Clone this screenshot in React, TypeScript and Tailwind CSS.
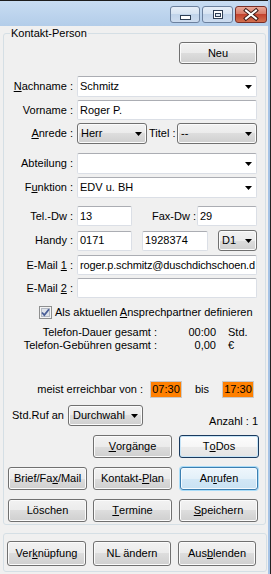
import type { ReactNode } from "react";

const font = "font-['Liberation_Sans',Arial,sans-serif]";

function Arrow() {
  return (
    <svg width="7" height="4" viewBox="0 0 7 4" className="shrink-0">
      <path d="M0 0h7L3.5 4z" fill="#000" />
    </svg>
  );
}

function U({ children }: { children: ReactNode }) {
  return <span className="underline underline-offset-[1px]">{children}</span>;
}

type BtnKind = "normal" | "def" | "hot";

function Btn({
  children,
  className = "",
  kind = "normal",
}: {
  children: ReactNode;
  className?: string;
  kind?: BtnKind;
}) {
  const styles: Record<BtnKind, string> = {
    normal:
      "border-[#707070] bg-[linear-gradient(#f2f2f2,#ebebeb_50%,#dddddd_50%,#cfcfcf)] shadow-[inset_0_0_0_1px_#fbfbfb]",
    def: "border-[#1a3a5e] bg-[linear-gradient(#fdfdfd,#f6f6f6_50%,#ececec_50%,#e4e4e4)] shadow-[inset_0_0_0_1px_#c6e4f7]",
    hot: "border-[#3c7fb1] bg-[linear-gradient(#eef6fc,#e3f0f9_50%,#d3e8f6_50%,#c9e2f3)] shadow-[0_0_0_1px_#a9dcf8,inset_0_0_0_1px_#f4fafe]",
  };
  return (
    <button
      type="button"
      className={`flex h-[23px] shrink-0 items-center justify-center rounded-[3px] border ${styles[kind]} ${className}`}
    >
      {children}
    </button>
  );
}

function TextBox({ value = "", className = "" }: { value?: string; className?: string }) {
  return (
    <div
      className={`flex h-[20px] shrink-0 items-center overflow-hidden whitespace-nowrap rounded-[2px] border border-[#dbdfe6] border-t-[#abadb3] bg-white pl-[2px] ${className}`}
    >
      {value}
    </div>
  );
}

function EditCombo({ value = "", className = "" }: { value?: string; className?: string }) {
  return (
    <div
      className={`flex h-[21px] shrink-0 items-center justify-between rounded-[2px] border border-[#dbdfe6] border-t-[#abadb3] bg-white pl-[2px] pr-[4px] ${className}`}
    >
      <span>{value}</span>
      <Arrow />
    </div>
  );
}

function DropCombo({ value, className = "" }: { value: string; className?: string }) {
  return (
    <div
      className={`flex h-[21px] shrink-0 items-center justify-between rounded-[3px] border border-[#707070] bg-[linear-gradient(#f2f2f2,#ebebeb_50%,#dddddd_50%,#cfcfcf)] pl-[3px] pr-[4px] shadow-[inset_0_0_0_1px_#fbfbfb] ${className}`}
    >
      <span>{value}</span>
      <Arrow />
    </div>
  );
}

function Label({ children }: { children: ReactNode }) {
  return <span className="w-[69px] shrink-0 text-right">{children}</span>;
}

function TitleBar() {
  return (
    <div className="flex h-[26px] shrink-0 items-start justify-end gap-[2px] border-t border-[#1c1c1c] bg-[linear-gradient(#c8dcf2,#b3cde9)] pr-[1px] pt-[5px]">
      <div className="h-[17px] w-[30px] rounded-[3px] border border-[#6c819e] bg-[linear-gradient(#e6eef8,#d5e2f1_50%,#c1d4ea_50%,#cddcef)]">
        <svg width="28" height="15" viewBox="0 0 28 15">
          <rect x="9.5" y="8.5" width="10" height="4" fill="#fff" stroke="#2f3f55" />
        </svg>
      </div>
      <div className="h-[17px] w-[31px] rounded-[3px] border border-[#6c819e] bg-[linear-gradient(#e6eef8,#d5e2f1_50%,#c1d4ea_50%,#cddcef)]">
        <svg width="29" height="15" viewBox="0 0 29 15">
          <rect x="10.5" y="3.5" width="9" height="8" fill="#fff" stroke="#2f3f55" />
          <rect x="12.5" y="6.5" width="5" height="3" fill="#dfe8f3" stroke="#2f3f55" />
        </svg>
      </div>
      <div className="h-[17px] w-[32px] rounded-[3px] border border-[#7a2f27] bg-[linear-gradient(#e9a898,#d77865_50%,#c4432f_50%,#d2704f)]">
        <svg width="30" height="15" viewBox="0 0 30 15">
          <path d="M10 3.5l10 8M20 3.5l-10 8" stroke="#3a1a16" strokeWidth="4" strokeLinecap="square" />
          <path d="M10 3.5l10 8M20 3.5l-10 8" stroke="#fff" strokeWidth="2" strokeLinecap="square" />
        </svg>
      </div>
    </div>
  );
}

function CheckBox() {
  return (
    <svg width="13" height="13" viewBox="0 0 13 13" className="shrink-0">
      <rect x="0.5" y="0.5" width="12" height="12" fill="#f4f4f4" stroke="#8e8f8f" />
      <rect x="2.5" y="2.5" width="8" height="8" fill="#dfe3ea" stroke="#b3b9c4" />
      <path d="M3 6.5l2.3 2.5L10 3.2" fill="none" stroke="#4a5f97" strokeWidth="1.8" />
    </svg>
  );
}

function TimeBox({ value }: { value: string }) {
  return (
    <div className="flex h-[17px] w-[32px] shrink-0 items-center justify-center border border-[#c9c9c9] bg-[#ff8000]">
      {value}
    </div>
  );
}

export default function App() {
  return (
    <div
      className={`flex h-[574px] w-[271px] overflow-hidden bg-[#f0f0f0] text-[11px] leading-[13px] text-black ${font}`}
    >
      <div className="flex w-[268px] shrink-0 flex-col">
        <TitleBar />

        {/* Kontakt-Person group */}
        <div className="relative ml-[3px] mt-[7px] flex h-[492px] w-[263px] shrink-0 flex-col rounded-[3px] border border-[#d5dfe5]">
          <span className="absolute left-[6px] top-[-7px] bg-[#f0f0f0] px-[1px]">Kontakt-Person</span>

          <div className="mt-[8px] flex">
            <Btn className="ml-[175px] w-[78px] !h-[22px]">Neu</Btn>
          </div>

          <div className="mt-[12px] flex items-center">
            <Label>
              <U>N</U>achname :
            </Label>
            <EditCombo value="Schmitz" className="ml-[4px] w-[180px]" />
          </div>

          <div className="mt-[3px] flex items-center">
            <Label>Vorname :</Label>
            <TextBox value="Roger P." className="ml-[4px] w-[180px]" />
          </div>

          <div className="mt-[3px] flex items-center">
            <Label>
              <U>A</U>nrede :
            </Label>
            <DropCombo value="Herr" className="ml-[4px] w-[70px]" />
            <span className="ml-[2px] w-[28px] shrink-0">Titel :</span>
            <DropCombo value="--" className="w-[80px]" />
          </div>

          <div className="mt-[9px] flex items-center">
            <Label>Abteilung :</Label>
            <EditCombo className="ml-[4px] w-[180px]" />
          </div>

          <div className="mt-[3px] flex items-center">
            <Label>
              F<U>u</U>nktion :
            </Label>
            <EditCombo value="EDV u. BH" className="ml-[4px] w-[180px]" />
          </div>

          <div className="mt-[8px] flex items-center">
            <Label>Tel.-Dw :</Label>
            <TextBox value="13" className="ml-[4px] w-[55px]" />
            <span className="w-[64px] shrink-0 text-right">Fax-Dw :</span>
            <TextBox value="29" className="ml-[1px] w-[60px]" />
          </div>

          <div className="mt-[4px] flex items-center">
            <Label>Handy :</Label>
            <TextBox value="0171" className="ml-[4px] w-[55px]" />
            <TextBox value="1928374" className="ml-[10px] w-[66px]" />
            <DropCombo value="D1" className="ml-[10px] w-[39px]" />
          </div>

          <div className="mt-[4px] flex items-center">
            <Label>
              E-Mail <U>1</U> :
            </Label>
            <TextBox
              value="roger.p.schmitz@duschdichschoen.d"
              className="ml-[4px] w-[180px] tracking-[-0.15px]"
            />
          </div>

          <div className="mt-[3px] flex items-center">
            <Label>
              E-Mail <U>2</U> :
            </Label>
            <TextBox className="ml-[4px] w-[180px]" />
          </div>

          <div className="mt-[8px] flex items-center">
            <span className="ml-[35px] flex">
              <CheckBox />
            </span>
            <span className="ml-[3px]">
              Als aktuellen <U>A</U>nsprechpartner definieren
            </span>
          </div>

          <div className="mt-[7px] flex">
            <span className="w-[153px] shrink-0 text-right">Telefon-Dauer gesamt :</span>
            <span className="w-[59px] shrink-0 text-right">00:00</span>
            <span className="ml-[12px]">Std.</span>
          </div>

          <div className="flex">
            <span className="w-[153px] shrink-0 text-right">Telefon-Gebühren gesamt :</span>
            <span className="w-[59px] shrink-0 text-right">0,00</span>
            <span className="ml-[12px]">€</span>
          </div>

          <div className="mt-[29px] flex items-center">
            <span className="w-[139px] shrink-0 text-right">meist erreichbar von :</span>
            <span className="ml-[7px] flex">
              <TimeBox value="07:30" />
            </span>
            <span className="w-[40px] shrink-0 text-center">bis</span>
            <TimeBox value="17:30" />
          </div>

          <div className="mt-[7px] flex h-[21px] items-start">
            <span className="ml-[8px] mt-[4px] w-[56px] shrink-0">Std.Ruf an</span>
            <DropCombo value="Durchwahl" className="w-[75px] !pl-[4px]" />
            <span className="ml-auto mr-[7px] mt-[10px]">Anzahl : 1</span>
          </div>

          <div className="mt-[9px] flex">
            <Btn className="ml-[89px] w-[79px]">
              <U>V</U>orgänge
            </Btn>
            <Btn kind="def" className="ml-[7px] w-[80px]">
              T<U>o</U>Dos
            </Btn>
          </div>

          <div className="mt-[9px] flex">
            <Btn className="ml-[4px] w-[79px]">
              Brief/Fa<U>x</U>/Mail
            </Btn>
            <Btn className="ml-[6px] w-[79px]">
              Kontakt-<U>P</U>lan
            </Btn>
            <Btn kind="hot" className="ml-[8px] w-[78px]">
              An<U>r</U>ufen
            </Btn>
          </div>

          <div className="mt-[9px] flex">
            <Btn className="ml-[4px] w-[79px]">Löschen</Btn>
            <Btn className="ml-[6px] w-[79px]">
              <U>T</U>ermine
            </Btn>
            <Btn className="ml-[7px] w-[79px]">
              <U>S</U>peichern
            </Btn>
          </div>
        </div>

        {/* bottom group */}
        <div className="ml-[3px] mt-[8px] flex h-[39px] w-[264px] shrink-0 items-start rounded-[3px] border border-[#d5dfe5] pt-[7px]">
          <Btn className="ml-[3px] w-[79px] !h-[25px]">
            Ver<U>k</U>nüpfung
          </Btn>
          <Btn className="ml-[7px] w-[78px] !h-[25px]">NL ändern</Btn>
          <Btn className="ml-[7px] w-[78px] !h-[25px]">
            Aus<U>b</U>lenden
          </Btn>
        </div>
      </div>
      <div className="w-[2px] shrink-0 bg-[#a6c3e6]" />
      <div className="w-[1px] shrink-0 bg-[#222]" />
    </div>
  );
}
